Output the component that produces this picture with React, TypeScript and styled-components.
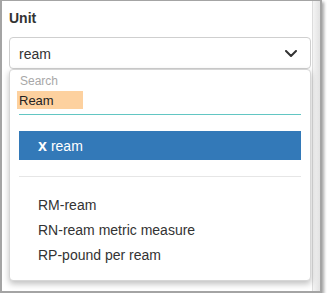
import styled, { createGlobalStyle } from "styled-components";

const GlobalStyle = createGlobalStyle`
  body {
    margin: 0;
    background: #fff;
    font-family: "Liberation Sans", Arial, sans-serif;
    color: #333;
  }
`;

const Frame = styled.div`
  box-sizing: border-box;
  width: 322px;
  height: 293px;
  border: 2px solid #a4a4a4;
  border-top-width: 1px;
  box-shadow: 2px 2px 3px rgba(0, 0, 0, 0.35);
  display: flex;
  background: #fff;
`;
const Main = styled.div`
  position: relative;
  flex: 1;
  padding: 7px 1px 0 7px;
`;
const Track = styled.div`
  width: 7px;
  border-left: 1px solid #dcdcdc;
  background: linear-gradient(to right, #f4f4f4, #e2e2e2);
`;
const Label = styled.div`
  font-size: 14px;
  font-weight: bold;
  line-height: 20px;
  color: #333;
`;
const Select = styled.div`
  box-sizing: border-box;
  margin-top: 9px;
  height: 32px;
  border: 1px solid #cfcfcf;
  border-radius: 4px;
  display: flex;
  align-items: center;
  justify-content: space-between;
  padding: 2px 13px 0 9px;
  font-size: 14px;
  color: #333;
`;
const BackRow = styled.div`
  margin-top: 84px;
  height: 34px;
  border-top: 1px solid #cdcdcd;
  border-bottom: 1px solid #cdcdcd;
  background: #ececec;
`;
const Dropdown = styled.div`
  position: absolute;
  top: 68px;
  left: 7px;
  box-sizing: border-box;
  width: 302px;
  height: 212px;
  border: 1px solid #d6d6d6;
  border-radius: 4px;
  background: #fff;
  box-shadow: 0 3px 6px rgba(0, 0, 0, 0.25);
  padding: 4px 9px 0 9px;
`;
const SearchLabel = styled.div`
  font-size: 12px;
  line-height: 15px;
  color: #a8a8a8;
  padding-left: 1px;
`;
const SearchField = styled.div`
  padding: 2px 0 5px 0;
  border-bottom: 1px solid #62c6c3;
`;
const SearchInput = styled.div`
  width: 64px;
  height: 18px;
  margin-left: -2px;
  padding-left: 2px;
  background: #fdd19f;
  font-size: 13px;
  line-height: 20px;
  color: #222;
`;
const Selected = styled.div`
  margin-top: 16px;
  height: 29px;
  background: #3379b8;
  color: #fff;
  font-size: 14px;
  display: flex;
  align-items: center;
  padding-left: 19px;
  gap: 4px;
`;
const Remove = styled.span`
  font-weight: bold;
  font-size: 16px;
`;
const Divider = styled.div`
  margin-top: 16px;
  border-top: 1px solid #e6e6e6;
`;
const Options = styled.ul`
  list-style: none;
  margin: 16px 0 0;
  padding: 0;
`;
const Option = styled.li`
  height: 25px;
  line-height: 25px;
  padding-left: 19px;
  font-size: 14px;
  color: #333;
`;

const Chevron = () => (
  <svg width="12" height="8" viewBox="0 0 12 8">
    <polyline
      points="1,1 6,6 11,1"
      fill="none"
      stroke="#333"
      strokeWidth="2"
      strokeLinecap="round"
      strokeLinejoin="round"
    />
  </svg>
);

const options = ["RM-ream", "RN-ream metric measure", "RP-pound per ream"];

const App = () => {
  return (
    <>
      <GlobalStyle />
      <Frame>
        <Main>
          <Label>Unit</Label>
          <Select>
            <span>ream</span>
            <Chevron />
          </Select>
          <BackRow />
          <Dropdown>
            <SearchLabel>Search</SearchLabel>
            <SearchField>
              <SearchInput>Ream</SearchInput>
            </SearchField>
            <Selected>
              <Remove>x</Remove>
              <span>ream</span>
            </Selected>
            <Divider />
            <Options>
              {options.map((o) => (
                <Option key={o}>{o}</Option>
              ))}
            </Options>
          </Dropdown>
        </Main>
        <Track />
      </Frame>
    </>
  );
};

export default App;
